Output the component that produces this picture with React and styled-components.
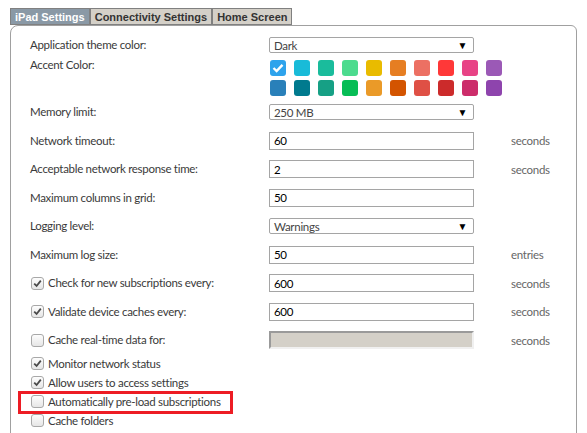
import React from "react";
import styled, { createGlobalStyle, css } from "styled-components";

const GlobalStyle = createGlobalStyle`
  html, body {
    margin: 0;
    padding: 0;
    background: #ffffff;
  }
  body {
    font-family: Lato, "Noto Sans", sans-serif;
    font-size: 11.5px;
    letter-spacing: -0.3px;
    color: #3a3a3a;
    overflow: hidden;
  }
`;

const Page = styled.div`
  padding: 8px 0 0 10px;
  width: 567px;
`;

const TabBar = styled.div`
  display: flex;
  height: 17px;
`;

const Tab = styled.div`
  display: flex;
  align-items: center;
  padding: 0 4px;
  height: 17px;
  box-sizing: border-box;
  border: 1px solid #808080;
  font-family: "Liberation Sans", Arial, sans-serif;
  font-weight: bold;
  font-size: 11px;
  letter-spacing: 0;
  background: ${(p) => (p.$active ? "#8a99a6" : "#d4d0c8")};
  color: ${(p) => (p.$active ? "#ffffff" : "#333333")};
`;

const Panel = styled.div`
  border: 1px solid #a0a0a0;
  border-radius: 8px 6px 0 0;
  height: 460px;
  padding: 5px 0 0 19px;
  box-sizing: border-box;
`;

const Row = styled.div`
  display: flex;
  align-items: center;
  height: ${(p) => p.$h || 28.5}px;
  ${(p) =>
    p.$top &&
    css`
      margin-top: ${p.$top}px;
    `}
`;

const AccentRow = styled.div`
  display: flex;
  align-items: flex-start;
  height: 37px;
`;

const Label = styled.div`
  width: 239px;
  flex: none;
  display: flex;
  align-items: center;
  line-height: 14px;
  white-space: nowrap;
`;

const AccentLabel = styled(Label)`
  line-height: 12px;
`;

const Select = styled.div`
  width: 205px;
  height: 16px;
  box-sizing: border-box;
  border: 1px solid #a5a5a5;
  border-radius: 2px;
  display: flex;
  align-items: center;
  justify-content: space-between;
  padding: 0 6px 0 4px;
  color: #444;
`;

const Arrow = styled.span`
  font-size: 10px;
  color: #000;
`;

const Input = styled.input`
  width: 205px;
  height: 18px;
  box-sizing: border-box;
  border: 1px solid #a5a5a5;
  padding: 0 4px;
  margin: 0;
  font-family: Lato, "Noto Sans", sans-serif;
  font-size: 11.5px;
  letter-spacing: -0.3px;
  color: #000;
  outline: none;
  ${(p) =>
    p.disabled &&
    css`
      background: #d4d0c8;
      border-top: 2px solid #9a9a9a;
      border-left: 2px solid #9a9a9a;
      border-right: 2px solid #f0f0f0;
      border-bottom: 2px solid #f0f0f0;
    `}
`;

const Unit = styled.span`
  margin-left: 37px;
  color: #666;
`;

const Swatches = styled.div`
  display: grid;
  grid-template-columns: repeat(10, 16px);
  grid-auto-rows: 16px;
  column-gap: 8px;
  row-gap: 4px;
  margin: 1px 0 0 1px;
`;

const Swatch = styled.div`
  border-radius: 3px;
  background: ${(p) => p.$color};
  display: flex;
  align-items: center;
  justify-content: center;
`;

const CheckList = styled.div`
  display: flex;
  flex-direction: column;
  align-items: flex-start;
  margin-top: -1px;
`;

const CheckRow = styled.div`
  display: inline-flex;
  align-items: center;
  height: 19px;
  position: relative;
  ${(p) =>
    p.$highlight &&
    css`
      &::after {
        content: "";
        position: absolute;
        left: -12px;
        right: -12px;
        top: -0.5px;
        bottom: -3.5px;
        border: 3px solid #ed1c24;
      }
    `}
`;

const Box = styled.span`
  width: 13px;
  height: 13px;
  box-sizing: border-box;
  border: 1px solid #a8a8a8;
  border-radius: 3px;
  background: linear-gradient(#fdfdfd, #e6e6e6);
  margin: 0 4px 0 1px;
  display: inline-flex;
  align-items: center;
  justify-content: center;
  flex: none;
`;

const Check = ({ on }) => (
  <Box>
    {on && (
      <svg width="9" height="9" viewBox="0 0 9 9">
        <path d="M1.2 4.6 L3.6 7 L7.8 1.6" fill="none" stroke="#4a4a4a" strokeWidth="1.8" />
      </svg>
    )}
  </Box>
);

const colors = [
  "#2ea3ec", "#19bbd8", "#1abc9c", "#4cdb8e", "#e9bb00", "#e67e22", "#ec7063", "#ff3838", "#e84386", "#9b59b6",
  "#2980b9", "#007a8e", "#16a085", "#06bd55", "#ea9a28", "#d35400", "#df5045", "#cc2b2b", "#cc2c6a", "#8e44ad",
];

const inputRows = [
  { label: "Network timeout:", value: "60", unit: "seconds" },
  { label: "Acceptable network response time:", value: "2", unit: "seconds" },
  { label: "Maximum columns in grid:", value: "50" },
  { label: "Logging level:", select: "Warnings" },
  { label: "Maximum log size:", value: "50", unit: "entries" },
  { label: "Check for new subscriptions every:", check: true, value: "600", unit: "seconds" },
  { label: "Validate device caches every:", check: true, value: "600", unit: "seconds" },
  { label: "Cache real-time data for:", check: false, disabled: true, value: "", unit: "seconds" },
];

const checks = [
  { label: "Monitor network status", on: true },
  { label: "Allow users to access settings", on: true },
  { label: "Automatically pre-load subscriptions", on: false, highlight: true },
  { label: "Cache folders", on: false },
];

export default function App() {
  return (
    <Page>
      <GlobalStyle />
      <TabBar>
        <Tab $active>iPad Settings</Tab>
        <Tab>Connectivity Settings</Tab>
        <Tab>Home Screen</Tab>
      </TabBar>
      <Panel>
        <Row $h={28}>
          <Label>Application theme color:</Label>
          <Select>
            Dark<Arrow>▼</Arrow>
          </Select>
        </Row>
        <AccentRow>
          <AccentLabel>Accent Color:</AccentLabel>
          <Swatches>
            {colors.map((c, i) => (
              <Swatch key={i} $color={c}>
                {i === 0 && (
                  <svg width="12" height="10" viewBox="0 0 12 10">
                    <path d="M1.5 5 L4.6 8 L10.5 1.8" fill="none" stroke="#fff" strokeWidth="2.4" />
                  </svg>
                )}
              </Swatch>
            ))}
          </Swatches>
        </AccentRow>
        <Row $top={2}>
          <Label>Memory limit:</Label>
          <Select>
            250 MB<Arrow>▼</Arrow>
          </Select>
        </Row>
        {inputRows.map((r) => (
          <Row key={r.label}>
            <Label>
              {r.check !== undefined && <Check on={r.check} />}
              {r.label}
            </Label>
            {r.select ? (
              <Select>
                {r.select}
                <Arrow>▼</Arrow>
              </Select>
            ) : (
              <Input defaultValue={r.value} disabled={r.disabled} readOnly />
            )}
            {r.unit && <Unit>{r.unit}</Unit>}
          </Row>
        ))}
        <CheckList>
          {checks.map((c) => (
            <CheckRow key={c.label} $highlight={c.highlight}>
              <Check on={c.on} />
              {c.label}
            </CheckRow>
          ))}
        </CheckList>
      </Panel>
    </Page>
  );
}
